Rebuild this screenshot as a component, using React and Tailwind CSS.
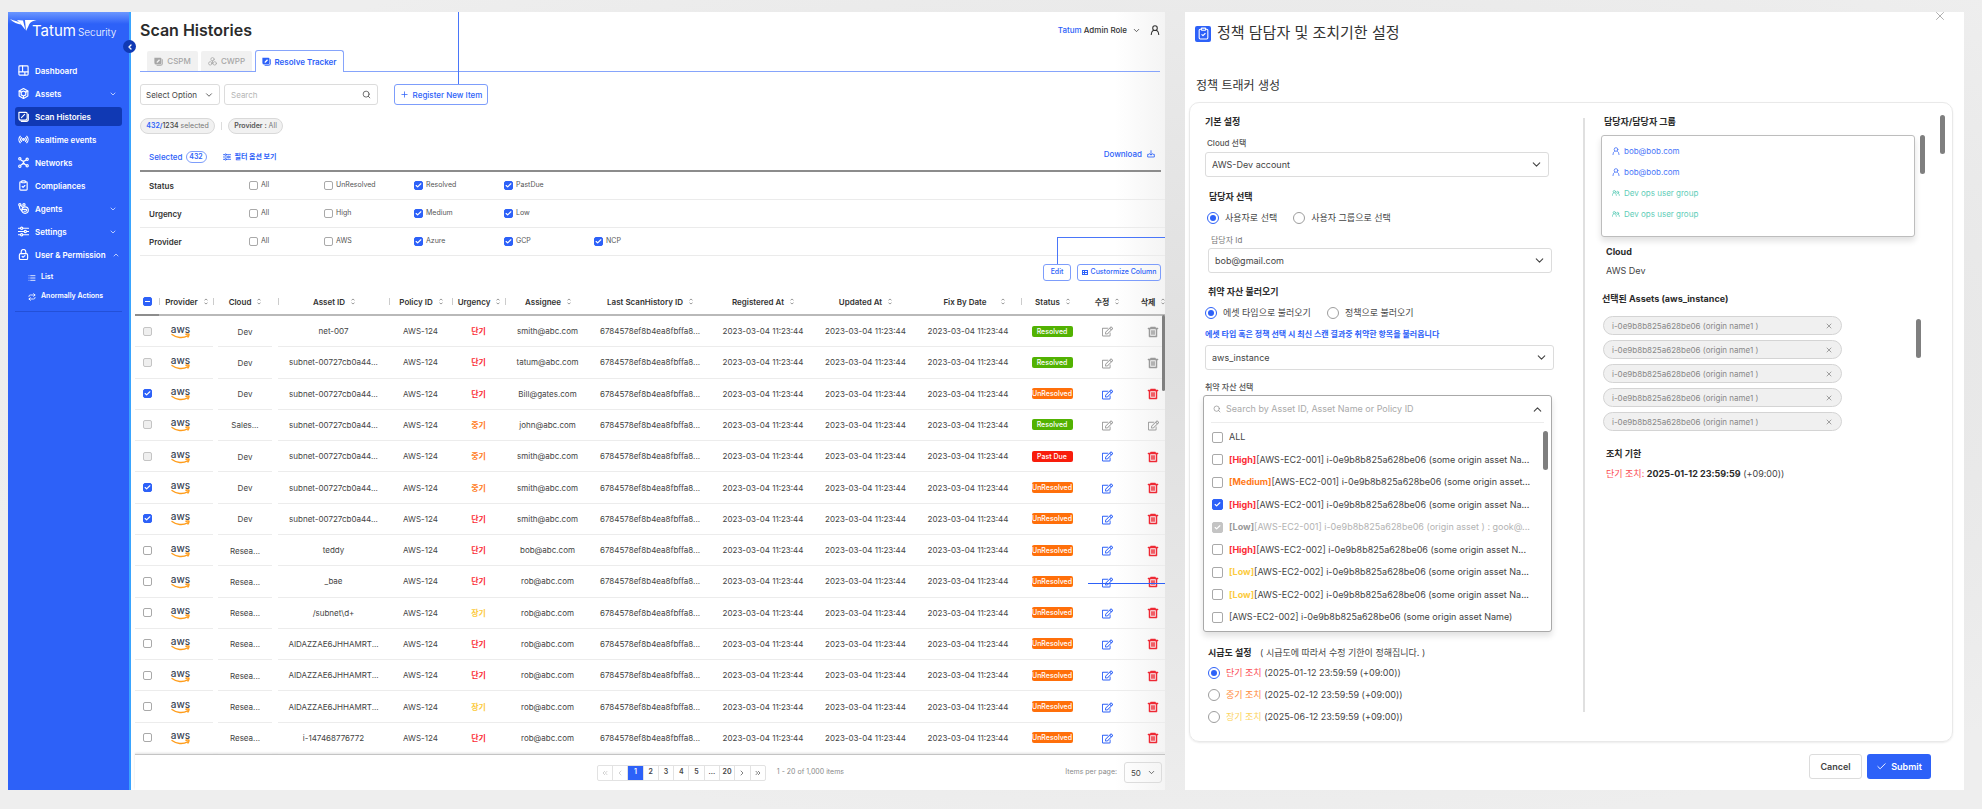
import React from 'react';
import clsx from 'clsx';
import {
  Check, ChevronDown, ChevronLeft, ChevronRight, ChevronUp, ChevronsLeft, ChevronsRight,
  ClipboardCheck, List, Plus, Radio, Repeat, Search, X,
} from 'lucide-react';
import { FaRegEdit } from 'react-icons/fa';
import { RiDeleteBin6Line } from 'react-icons/ri';

const Svg = ({ size = 11, strokeWidth = 2, className, children }) => (
  <svg
    width={size}
    height={size}
    viewBox="0 0 24 24"
    fill="none"
    stroke="currentColor"
    strokeWidth={strokeWidth}
    strokeLinecap="round"
    strokeLinejoin="round"
    className={clsx('shrink-0', className)}
    aria-hidden="true"
  >
    {children}
  </svg>
);

const DashboardIcon = (p) => (
  <Svg {...p}>
    <rect x="2" y="2" width="20" height="20" rx="2" />
    <path d="M10 2v13M2 15h20M15 15v7" />
  </Svg>
);

const AssetsIcon = (p) => (
  <Svg {...p}>
    <path d="M12 1l9.500 5.500v11L12 23l-9.500-5.500v-11z" />
    <path d="M12 6.500l5 2.500v6l-5 2.500L7 15V9z" />
    <path d="M2.500 6.500L7 9M21.500 6.500L17 9M12 18v5" />
  </Svg>
);

const ScanIcon = (p) => (
  <Svg {...p}>
    <path d="M2 3h15a3 3 0 0 1 3 3v9a5 5 0 0 1-5 5H7a5 5 0 0 1-5-5z" />
    <path d="M7 22.500h11a4.500 4.500 0 0 0 4.500-4.500V7" />
    <path d="M7.500 14.500l7-7" />
  </Svg>
);

const ScanSolidIcon = ({ size = 9 }) => (
  <svg width={size} height={size} viewBox="0 0 24 24" fill="currentColor" className="shrink-0" aria-hidden="true">
    <path fillRule="evenodd" d="M1 2h16a3 3 0 0 1 3 3v10a5 5 0 0 1-5 5H6a5 5 0 0 1-5-5zM7 12.500L13.500 6 16 8.500 9.500 15H7z" />
    <path d="M7 21.500h9a5.500 5.500 0 0 0 5.500-5.500V6h2v11a6.500 6.500 0 0 1-6.500 6.500H7z" />
  </svg>
);

const NetworksIcon = (p) => (
  <Svg {...p}>
    <circle cx="4" cy="4" r="2.500" />
    <circle cx="20" cy="5" r="2.500" />
    <circle cx="4" cy="20" r="2.500" />
    <circle cx="20" cy="19" r="2.500" />
    <path d="M6 6c3 4 9 4 12 0M6 18c3-4 9-4 12 0M9 8l6 8M15 8l-6 8" />
  </Svg>
);

const AgentsIcon = (p) => (
  <Svg {...p}>
    <circle cx="4" cy="4" r="2.500" />
    <circle cx="13" cy="4" r="2.500" />
    <path d="M3 7c0 5 2 8 5 10M6 5l5 5" />
    <circle cx="15.500" cy="15.500" r="7" />
    <path d="M9 14h8a2 2 0 0 1 0 4h-4" />
  </Svg>
);

const SlidersIcon = (p) => (
  <Svg {...p}>
    <path d="M1 5h4M11 5h12M1 12h12M19 12h4M1 19h4M11 19h12" />
    <circle cx="8" cy="5" r="2.500" />
    <circle cx="16" cy="12" r="2.500" />
    <circle cx="8" cy="19" r="2.500" />
  </Svg>
);

const LockIcon = (p) => (
  <Svg {...p}>
    <rect x="3" y="10" width="18" height="13" rx="3" />
    <path d="M7 10V6a5 5 0 0 1 10 0v4M9 16l2 2 4-3.500" />
  </Svg>
);

const CloudNodesIcon = (p) => (
  <Svg {...p}>
    <circle cx="12" cy="6" r="4.500" />
    <circle cx="6" cy="17" r="4.500" />
    <circle cx="18" cy="17" r="4.500" />
    <path d="M12 10v8" />
  </Svg>
);

const UserIcon = (p) => (
  <Svg {...p}>
    <circle cx="12" cy="7.500" r="5.500" />
    <path d="M3 23l1-5c.5-2.500 2-4 4.500-5.500M21 23l-1-5c-.5-2.500-2-4-4.500-5.500" />
  </Svg>
);

const UsersIcon = (p) => (
  <Svg {...p}>
    <circle cx="7" cy="8" r="3.500" />
    <path d="M1 19c0-4 2-6 4-7.500M13 19c0-4-2-6-4-7.500" />
    <circle cx="17" cy="10" r="3" />
    <path d="M22 19c0-3-1-5-3-6" />
  </Svg>
);

const DownloadIcon = (p) => (
  <Svg {...p}>
    <path d="M12 2v13M8 11l4 4 4-4M6 13H2v8h20v-8h-4" />
  </Svg>
);

const SortIcon = () => (
  <svg width="4" height="7" viewBox="0 0 8 14" fill="none" stroke="#9a9a9a" strokeWidth="2" className="shrink-0" aria-hidden="true">
    <path d="M1 4.500L4 2l3 2.500M1 9.500L4 12l3-2.500" />
  </svg>
);

const Checkbox = ({ id, checked = false, disabled = false, indeterminate = false, big = false, label }) => (
  <span className={clsx('grid shrink-0', big ? 'size-[11px]' : 'size-[9px]')}>
    <input
      id={id}
      type="checkbox"
      aria-label={label}
      defaultChecked={checked}
      disabled={disabled}
      className="peer col-start-1 row-start-1 size-full appearance-none rounded-[2px] border border-[#a9a9a9] bg-white checked:border-[#2d61f8] checked:bg-[#2d61f8] disabled:border-[#c4c4c4] disabled:bg-[#efefef] disabled:checked:border-[#c4c4c4] disabled:checked:bg-[#c4c4c4]"
    />
    <span className="pointer-events-none invisible col-start-1 row-start-1 grid place-items-center text-white peer-checked:visible">
      {indeterminate ? <span className="h-px w-[5px] bg-white" /> : <Check size={7} strokeWidth={4} />}
    </span>
  </span>
);

const SelectBox = ({ value, label, className, selectClass, chevron = 11, id }) => (
  <div className={clsx('grid items-center', className)}>
    <select
      id={id}
      aria-label={label}
      defaultValue={value}
      className={clsx(
        'col-start-1 row-start-1 h-full w-full appearance-none rounded-[3px] border border-[#dcdcdc] bg-transparent text-[#444]',
        selectClass,
      )}
    >
      <option>{value}</option>
    </select>
    <ChevronDown size={chevron} className="pointer-events-none col-start-1 row-start-1 mr-[6px] justify-self-end text-[#444]" />
  </div>
);

const NAV = [
  { label: 'Dashboard', Icon: DashboardIcon },
  { label: 'Assets', Icon: AssetsIcon, chevron: 'down' },
  { label: 'Scan Histories', Icon: ScanIcon, active: true },
  { label: 'Realtime events', Icon: Radio },
  { label: 'Networks', Icon: NetworksIcon },
  { label: 'Compliances', Icon: ClipboardCheck },
  { label: 'Agents', Icon: AgentsIcon, chevron: 'down' },
  { label: 'Settings', Icon: SlidersIcon, chevron: 'down' },
  { label: 'User & Permission', Icon: LockIcon, chevron: 'up' },
];

const Sidebar = () => (
  <aside className="relative flex w-[123px] shrink-0 flex-col border-r-2 border-[#39a4ff] bg-[#2d61f8] bg-[linear-gradient(#6b97ff,#2d61f8_12px)] text-white">
    <div className="flex h-[36px] items-start pt-[7px] pl-[2px]">
      <svg width="27" height="14" viewBox="0 0 27 14" fill="#fff" className="shrink-0" aria-hidden="true">
        <path d="M0 0c3 1.500 7 2 9.500 3.500l1.500 2C8 5 3 3.500 0 0z" />
        <path d="M7 1l6 .5L15.500 11 11.500 6z" />
        <path d="M15 1h11.500c-5 1-7 3-8 6L16 12z" />
      </svg>
      <span className="-ml-[5px] flex items-baseline gap-[2px] pt-[4px]">
        <span className="text-[15px] leading-[16px]">Tatum</span>
        <span className="text-[10px] leading-[16px] font-light">Security</span>
      </span>
    </div>
    <button
      type="button"
      aria-label="Collapse menu"
      className="absolute top-[28px] -right-[7px] z-10 grid size-[13px] place-items-center rounded-full bg-[#1039b4]"
    >
      <ChevronLeft size={8} strokeWidth={4} />
    </button>

    <nav className="mt-[13px] flex flex-col gap-1 px-[7px]">
      {NAV.map(({ label, Icon, active, chevron }) => (
        <a
          key={label}
          href="#"
          className={clsx('flex h-[19px] items-center gap-[6px] rounded-[3px] px-[3px] text-[8px] font-semibold', active && 'bg-[#1039b4]')}
        >
          <Icon size={11} strokeWidth={2.5} className="shrink-0" />
          <span className="whitespace-nowrap">{label}</span>
          {chevron === 'down' && <ChevronDown size={8} className="mr-[2px] ml-auto shrink-0" />}
          {chevron === 'up' && <ChevronUp size={8} className="mr-[2px] ml-auto shrink-0" />}
        </a>
      ))}
      <div className="flex flex-col border-b border-[#2350d8] pb-[5px] pl-[13px] text-[7px] font-semibold">
        <a href="#" className="flex h-[19px] items-center gap-[5px]"><List size={8} strokeWidth={2.5} /> List</a>
        <a href="#" className="flex h-[19px] items-center gap-[5px]"><Repeat size={8} strokeWidth={2.5} /> Anormally Actions</a>
      </div>
    </nav>
  </aside>
);

const FILTERS = [
  { name: 'Status', options: [['All'], ['UnResolved'], ['Resolved', true], ['PastDue', true]] },
  { name: 'Urgency', options: [['All'], ['High'], ['Medium', true], ['Low', true]] },
  { name: 'Provider', options: [['All'], ['AWS'], ['Azure', true], ['GCP', true], ['NCP', true]] },
];

const COLUMNS = [
  { name: 'Provider', width: 59, sep: true },
  { name: 'Cloud', width: 60 },
  { name: 'Asset ID', width: 111, sep: true },
  { name: 'Policy ID', width: 63, sep: true },
  { name: 'Urgency', width: 53, sep: true },
  { name: 'Assignee', width: 85, sep: true },
  { name: 'Last ScanHistory ID', width: 120 },
  { name: 'Registered At', width: 106 },
  { name: 'Updated At', width: 99 },
  { name: 'Fix By Date', width: 106 },
  { name: 'Status', width: 62, sep: true },
  { name: '수정', width: 48 },
  { name: '삭제', width: 34 },
];

// cloud, asset, urgency, assignee, status, checkbox
const ROWS = [
  ['Dev', 'net-007', '단기', 'smith@abc.com', 'Resolved', 'disabled'],
  ['Dev', 'subnet-00727cb0a44...', '단기', 'tatum@abc.com', 'Resolved', 'disabled'],
  ['Dev', 'subnet-00727cb0a44...', '단기', 'Bill@gates.com', 'UnResolved', 'checked'],
  ['Sales...', 'subnet-00727cb0a44...', '중기', 'john@abc.com', 'Resolved', 'disabled'],
  ['Dev', 'subnet-00727cb0a44...', '중기', 'smith@abc.com', 'Past Due', 'disabled'],
  ['Dev', 'subnet-00727cb0a44...', '중기', 'smith@abc.com', 'UnResolved', 'checked'],
  ['Dev', 'subnet-00727cb0a44...', '단기', 'smith@abc.com', 'UnResolved', 'checked'],
  ['Resea...', 'teddy', '단기', 'bob@abc.com', 'UnResolved'],
  ['Resea...', '_bae', '단기', 'rob@abc.com', 'UnResolved'],
  ['Resea...', '/subnet\\d+', '장기', 'rob@abc.com', 'UnResolved'],
  ['Resea...', 'AIDAZZAE6JHHAMRT...', '단기', 'rob@abc.com', 'UnResolved'],
  ['Resea...', 'AIDAZZAE6JHHAMRT...', '단기', 'rob@abc.com', 'UnResolved'],
  ['Resea...', 'AIDAZZAE6JHHAMRT...', '장기', 'rob@abc.com', 'UnResolved'],
  ['Resea...', 'i-147468776772', '단기', 'rob@abc.com', 'UnResolved'],
];

const URGENCY_COLORS = {
  단기: 'text-[#fb2c36]',
  중기: 'text-[#ff7a1a]',
  장기: 'text-[#fccb3f]',
};

const STATUS_COLORS = {
  Resolved: 'bg-[#52b202]',
  UnResolved: 'bg-[#ff6f0a]',
  'Past Due': 'bg-[#f81d0c]',
};

const AwsLogo = () => (
  <span className="flex w-[19px] flex-col items-center">
    <span className="text-[10px] leading-[8px] font-medium text-[#3b4656]">aws</span>
    <svg width="19" height="6" viewBox="0 0 19 6" fill="none" stroke="#ff9d1c" strokeWidth="1.400" strokeLinecap="round" aria-hidden="true">
      <path d="M1 1.500c4.500 3.500 11 4 15.500 1.300M15 1.200c1.500-.4 3-.3 3 .1s-.3 2-1 2.700" />
    </svg>
  </span>
);

const HistoryTable = () => (
  <table className="mt-2 h-[465px] w-full table-fixed border-separate border-spacing-0 text-center text-[8px] whitespace-nowrap text-[#444]">
    <colgroup>
      <col style={{ width: 24 }} />
      {COLUMNS.map((c) => <col key={c.name + c.width} style={{ width: c.width }} />)}
    </colgroup>
    <thead>
      <tr className="h-[27px] font-semibold text-[#333]">
        <th className="border-b-2 border-[#8d8d8d] p-0">
          <div className="flex justify-center">
            <Checkbox checked indeterminate label="Select all" />
          </div>
        </th>
        {COLUMNS.map((c) => (
          <th key={c.name + c.width} className="border-b-2 border-[#b9b9b9] p-0 font-semibold">
            <div
              className={clsx(
                'flex h-[7px] items-center justify-center',
                c.sep && 'border-l border-[#ccc]',
                c.name === 'Provider' && 'mr-1 border-r',
                c.name === 'Cloud' && 'pr-[6px]',
                c.name === '삭제' && 'pl-[10px]',
                c.name === 'Fix By Date' ? 'gap-[14px] pl-3' : 'gap-[6px]',
              )}
            >
              {c.name}
              <SortIcon />
            </div>
          </th>
        ))}
      </tr>
    </thead>
    <tbody className="[&_td]:p-0">
      {ROWS.map(([cloud, asset, urgency, assignee, status, box], i) => {
        const resolved = status === 'Resolved';
        const line = 'border-b border-[#ececec]';
        return (
          <tr key={i}>
            <td className={line}>
              <div className="flex justify-center">
                <Checkbox checked={box === 'checked'} disabled={box === 'disabled'} label={'Select ' + asset} />
              </div>
            </td>
            {/* the rule under these two cells stops short of the next column */}
            <td className="bg-[linear-gradient(#ececec,#ececec)] bg-[length:calc(100%-5px)_1px] bg-left-bottom bg-no-repeat">
              <div className="pl-3"><AwsLogo /></div>
            </td>
            <td className="bg-[linear-gradient(#ececec,#ececec)] bg-[length:calc(100%-6px)_1px] bg-left-bottom bg-no-repeat">
              <div className="pr-[6px]">{cloud}</div>
            </td>
            <td className={line}>{asset}</td>
            <td className={line}>AWS-124</td>
            <td className={clsx(line, 'font-bold', URGENCY_COLORS[urgency])}>{urgency}</td>
            <td className={line}>{assignee}</td>
            <td className={line}>6784578ef8b4ea8fbffa8...</td>
            <td className={line}>2023-03-04 11:23:44</td>
            <td className={line}>2023-03-04 11:23:44</td>
            <td className={line}>2023-03-04 11:23:44</td>
            <td className={line}>
              <span className={clsx('mx-auto flex h-[11px] w-[41px] items-center justify-center rounded-[2px] text-[7px] leading-[11px] font-medium text-white', STATUS_COLORS[status])}>
                {status}
              </span>
            </td>
            <td className={clsx(line, 'relative')}>
              <button type="button" aria-label="수정" className={clsx('align-middle', resolved ? 'text-[#9b9b9b]' : 'text-[#2d61f8]')}>
                <FaRegEdit size={11} />
              </button>
              {i === 8 && <span className="absolute top-[17px] left-[5px] z-10 h-px w-[77px] bg-[#2d61f8]" />}
            </td>
            <td className={line}>
              <button type="button" aria-label="삭제" className={clsx('pl-[10px] align-middle', resolved ? 'text-[#9b9b9b]' : 'text-[#ee2a34]')}>
                {i === 3 ? <FaRegEdit size={11} /> : <RiDeleteBin6Line size={12} strokeWidth={1} />}
              </button>
            </td>
          </tr>
        );
      })}
    </tbody>
  </table>
);

const PAGES = ['1', '2', '3', '4', '5', '...', '20'];

const Pagination = () => (
  <footer className="grid h-9 grid-cols-[464fr_169px_401fr] items-center border-t border-[#c4c4c4] shadow-[0_-1px_2px_rgba(0,0,0,0.12)]">
    <span />
    <div className="flex h-4 divide-x divide-[#e2e2e2] rounded-[2px] border border-[#e2e2e2] text-[7px] font-semibold text-[#444] [&>button]:grid [&>button]:flex-1 [&>button]:place-items-center">
      <button type="button" aria-label="First page" className="text-[#bbb]"><ChevronsLeft size={8} /></button>
      <button type="button" aria-label="Previous page" className="text-[#bbb]"><ChevronLeft size={8} /></button>
      {PAGES.map((p) => (
        <button key={p} type="button" className={clsx(p === '1' && 'bg-[#2d61f8] text-white')}>{p}</button>
      ))}
      <button type="button" aria-label="Next page"><ChevronRight size={8} /></button>
      <button type="button" aria-label="Last page"><ChevronsRight size={8} /></button>
    </div>
    <div className="flex items-center pr-[3px] pl-[11px] text-[7px] text-[#8a8a8a]">
      <span>1 - 20 of 1,000 items</span>
      <label htmlFor="per-page" className="ml-auto pr-[7px]">Items per page:</label>
      <SelectBox id="per-page" value="50" className="h-[21px] w-[38px]" selectClass="pl-[6px] text-[8px]" chevron={9} />
    </div>
  </footer>
);

const TABS = [
  { label: 'CSPM', Icon: ScanSolidIcon },
  { label: 'CWPP', Icon: CloudNodesIcon },
];

const ScanHistories = () => (
  <section className="flex overflow-hidden bg-white">
    <Sidebar />
    <main className="min-w-0 flex-1 bg-[linear-gradient(to_left,#f4f4f4,#fff_50px)] pl-1">
      <div className="pl-[5px]">
        <header className="flex h-9 items-center justify-between pr-[5px]">
          <h1 className="text-[16px] font-semibold text-[#2b2b2b]">Scan Histories</h1>
          <div className="flex items-center text-[8px] font-medium text-[#333]">
            <button type="button" className="flex items-center gap-[5px]">
              <span><span className="text-[#2d61f8]">Tatum</span> Admin Role</span>
              <ChevronDown size={9} />
            </button>
            <button type="button" aria-label="Account" className="ml-[9px]"><UserIcon size={10} strokeWidth={2.5} /></button>
          </div>
        </header>

        <nav className="mr-[5px] flex h-6 items-end gap-[3px] border-b border-[#86a4fb] pl-[7px] text-[8px] font-medium">
          {TABS.map(({ label, Icon }) => (
            <a key={label} href="#" className="flex h-5 w-[51px] items-center justify-center gap-1 rounded-t-[2px] bg-[#f1f1f1] text-[#a6a6a6]">
              <Icon size={9} /> {label}
            </a>
          ))}
          <a href="#" className="-mb-px flex h-[22px] w-[89px] items-center justify-center gap-[3px] rounded-t-[3px] border border-b-0 border-[#86a4fb] bg-white font-semibold text-[#2d61f8]">
            <ScanSolidIcon size={9} /> Resolve Tracker
          </a>
        </nav>

        <div className="mt-3 flex h-[21px] items-stretch">
          <SelectBox value="Select Option" label="Search field" className="w-20" selectClass="pl-[5px] text-[8px]" chevron={10} />
          <label className="ml-1 flex w-[154px] items-center rounded-[3px] border border-[#dcdcdc] px-[6px] text-[8px]">
            <input type="search" aria-label="Search" placeholder="Search" className="min-w-0 flex-1 outline-none placeholder:text-[#b5b5b5]" />
            <Search size={9} className="text-[#444]" />
          </label>
          <div className="relative ml-4 w-[94px]">
            <button type="button" className="flex h-full w-full items-center justify-center gap-1 rounded-[3px] border border-[#7d9dfb] text-[8px] font-medium text-[#2d61f8]">
              <Plus size={9} strokeWidth={2} /> Register New Item
            </button>
            <span className="absolute bottom-full left-[64px] h-[72px] w-px bg-[#4a76f9]" />
          </div>
        </div>

        <div className="mt-[13px] flex h-4 items-center text-[7px] text-[#777]">
          <span className="flex h-4 w-[75px] items-center justify-center rounded-full border border-[#d9d9d9] bg-[#f1f1f1]">
            <span className="font-semibold text-[#2d61f8]">432/</span>
            <span className="font-medium text-[#444]">1234</span>&nbsp;selected
          </span>
          <span className="mx-[6px] h-2 w-px bg-[#ddd]" />
          <span className="flex h-4 w-[55px] items-center justify-center rounded-full border border-[#d9d9d9] bg-[#f1f1f1]">
            <span className="font-semibold text-[#555]">Provider :</span>&nbsp;All
          </span>
        </div>

        <div className="mr-1 flex h-[38px] items-center border-b-2 border-[#8c8c8c] pt-[10px] pl-[9px] text-[8px] font-medium text-[#2d61f8]">
          <span>Selected</span>
          <span className="ml-[3px] flex h-3 w-[21px] items-center justify-center rounded-full border border-[#7d9dfb] text-[7px] font-semibold">432</span>
          <button type="button" className="ml-4 flex items-center gap-1 text-[7px] font-bold"><SlidersIcon size={8} strokeWidth={2.5} /> 필터 옵션 보기</button>
          <button type="button" className="mr-[6px] ml-auto flex items-center gap-[5px] pb-[6px]">Download <DownloadIcon size={8} strokeWidth={2.5} /></button>
        </div>

        {FILTERS.map(({ name, options }) => (
          <fieldset key={name} aria-label={name} className="flex h-7 items-center border-b border-[#ebebeb] pl-[9px] text-[7px] text-[#555]">
            <span className="w-[100px] text-[8px] font-semibold text-[#333]">{name}</span>
            {options.map(([option, checked], i) => (
              <div key={option} className={clsx('flex items-center gap-[3px]', i === 0 ? 'w-[75px]' : 'w-[90px]')}>
                <Checkbox id={name + option} checked={checked} />
                <label htmlFor={name + option}>{option}</label>
              </div>
            ))}
          </fieldset>
        ))}

        <div className="mt-2 mr-1 flex h-[17px] justify-end gap-[6px] text-[7px] font-medium text-[#2d61f8]">
          <div className="relative w-7">
            <button type="button" className="grid h-full w-full place-items-center rounded-[3px] border border-[#7d9dfb]">Edit</button>
            <span className="absolute bottom-full left-[14px] h-[27px] w-[108px] border-t border-l border-[#4a76f9]" />
          </div>
          <button type="button" className="flex w-[84px] items-center justify-center gap-[3px] rounded-[3px] border border-[#7d9dfb] whitespace-nowrap">
            <svg width="6" height="5" viewBox="0 0 6 5" fill="#2d61f8" className="shrink-0" aria-hidden="true">
              <path d="M0 0h6v1H0zM0 1h1v4H0zM2 1h1v4H2zM5 1h1v4H5zM0 4h6v1H0zM0 2h6v1H0z" />
            </svg>
            Custormize Column
          </button>
        </div>
      </div>

      <div className="relative">
        <HistoryTable />
        <span className="absolute top-[26px] right-0 h-[76px] w-[3px] rounded-full bg-[#7f7f7f]" />
      </div>
      <Pagination />
    </main>
  </section>
);

const RadioOption = ({ name, checked, children, id }) => (
  <div className="flex items-center gap-[6px]">
    <input
      id={id}
      type="radio"
      name={name}
      defaultChecked={checked}
      className="size-3 shrink-0 appearance-none rounded-full border border-[#9d9d9d] bg-white bg-clip-content p-[2px] checked:border-[#2d61f8] checked:bg-[#2d61f8]"
    />
    <label htmlFor={id}>{children}</label>
  </div>
);

const ScrollThumb = ({ className }) => <span className={clsx('absolute h-[39px] w-[5px] rounded-full bg-[#7f7f7f]', className)} />;

const ASSETS = [
  { text: 'ALL' },
  { level: '[High]', text: '[AWS-EC2-001] i-0e9b8b825a628be06 (some origin asset Na...' },
  { level: '[Medium]', text: '[AWS-EC2-001] i-0e9b8b825a628be06 (some origin asset...' },
  { level: '[High]', text: '[AWS-EC2-001] i-0e9b8b825a628be06 (some origin asset Na...', checked: true },
  { level: '[Low]', text: '[AWS-EC2-001] i-0e9b8b825a628be06 (origin asset ) : gook@...', checked: true, disabled: true },
  { level: '[High]', text: '[AWS-EC2-002] i-0e9b8b825a628be06 (some origin asset N...' },
  { level: '[Low]', text: '[AWS-EC2-002] i-0e9b8b825a628be06 (some origin asset Na...' },
  { level: '[Low]', text: '[AWS-EC2-002] i-0e9b8b825a628be06 (some origin asset Na...' },
  { text: '[AWS-EC2-002] i-0e9b8b825a628be06 (some origin asset Name)' },
];

const LEVEL_COLORS = {
  '[High]': 'text-[#fb2c36]',
  '[Medium]': 'text-[#ff7a1a]',
  '[Low]': 'text-[#fccb3f]',
};

const DEADLINES = [
  ['단기 조치', '(2025-01-12 23:59:59 (+09:00))', 'text-[#fb4a52]'],
  ['중기 조치', '(2025-02-12 23:59:59 (+09:00))', 'text-[#ff8a3a]'],
  ['장기 조치', '(2025-06-12 23:59:59 (+09:00))', 'text-[#fcd35f]'],
];

const PolicyForm = () => (
  <div className="w-[393px] shrink-0 pl-[15px] text-[9px] leading-[12px] text-[#444]">
    <h3 className="pt-[13px] font-bold text-[#2b2b2b]">기본 설정</h3>
    <label htmlFor="cloud" className="mt-[9px] block pl-[2px] text-[8px] font-medium text-[#555]">Cloud 선택</label>
    <SelectBox id="cloud" value="AWS-Dev account" className="mt-[3px] h-[25px] w-[344px]" selectClass="pl-[6px] text-[9px]" chevron={13} />

    <h3 className="mt-[14px] pl-[4px] font-bold text-[#2b2b2b]">담당자 선택</h3>
    <div className="mt-[9px] flex gap-4 pl-[2px]">
      <RadioOption id="by-user" name="owner" checked>사용자로 선택</RadioOption>
      <RadioOption id="by-group" name="owner">사용자 그룹으로 선택</RadioOption>
    </div>
    <label htmlFor="owner" className="mt-[10px] block pl-[6px] text-[8px] text-[#777]">담당자 Id</label>
    <SelectBox id="owner" value="bob@gmail.com" className="mt-[2px] ml-[3px] h-[25px] w-[344px]" selectClass="pl-[6px] text-[9px]" chevron={13} />

    <h3 className="mt-[13px] pl-[3px] font-bold text-[#2b2b2b]">취약 자산 불러오기</h3>
    <div className="mt-[9px] flex gap-4">
      <RadioOption id="by-type" name="source" checked>에셋 타입으로 불러오기</RadioOption>
      <RadioOption id="by-policy" name="source">정책으로 불러오기</RadioOption>
    </div>
    <p className="mt-[9px] text-[8px] font-bold text-[#2d61f8]">에셋 타입 혹은 정책 선택 시 최신 스캔 결과중 취약한 항목을 불러옵니다</p>
    <SelectBox value="aws_instance" label="Asset type" className="mt-[5px] h-[25px] w-[349px]" selectClass="pl-[6px] text-[9px]" chevron={13} />

    <label htmlFor="asset-search" className="mt-[11px] block text-[8px] font-medium text-[#555]">취약 자산 선택</label>
    <div className="relative mt-[2px] -ml-[2px] h-[237px] w-[349px] rounded-[3px] border border-[#a9a9a9] bg-white px-[7px] shadow-[0_4px_6px_rgba(0,0,0,0.12)]">
      <div className="flex h-[27px] items-center gap-[5px] border-b border-[#ececec] pl-[2px]">
        <Search size={8} className="text-[#888]" />
        <input
          id="asset-search"
          type="text"
          placeholder="Search by Asset ID, Asset Name or Policy ID"
          className="min-w-0 flex-1 text-[9px] outline-none placeholder:text-[#aaa]"
        />
        <ChevronUp size={13} />
      </div>
      <ul className="flex h-[208px] flex-col justify-between py-[8px] pl-px whitespace-nowrap">
        {ASSETS.map(({ level, text, checked, disabled }, i) => (
          <li key={i} className="flex items-center gap-[6px]">
            <Checkbox id={'asset-' + i} big checked={checked} disabled={disabled} />
            <label htmlFor={'asset-' + i} className={clsx(disabled && 'text-[#b3b3b3]')}>
              {level && <span className={clsx('font-bold', disabled ? 'text-[#999]' : LEVEL_COLORS[level])}>{level}</span>}
              {text}
            </label>
          </li>
        ))}
      </ul>
      <ScrollThumb className="top-[35px] right-[3px]" />
    </div>

    <h3 className="mt-[15px] pl-[3px]">
      <span className="mr-[6px] font-bold text-[#2b2b2b]">시급도 설정</span> ( 시급도에 따라서 수정 기한이 정해집니다. )
    </h3>
    <div className="mt-2 flex flex-col gap-[10px] pl-[3px]">
      {DEADLINES.map(([name, date, color], i) => (
        <RadioOption key={name} id={'deadline-' + i} name="deadline" checked={i === 0}>
          <span className={color}>{name}</span> {date}
        </RadioOption>
      ))}
    </div>
  </div>
);

const OWNERS = [
  ['bob@bob.com', UserIcon, 'text-[#4a76f9]'],
  ['bob@bob.com', UserIcon, 'text-[#4a76f9]'],
  ['Dev ops user group', UsersIcon, 'text-[#5fcdb8]'],
  ['Dev ops user group', UsersIcon, 'text-[#5fcdb8]'],
];

const PolicySummary = () => (
  <div className="min-w-0 flex-1 pl-4 text-[9px] leading-[12px] text-[#444]">
    <h3 className="pt-[13px] pl-[3px] font-bold text-[#2b2b2b]">담당자/담당자 그룹</h3>
    <div className="relative mt-[7px] h-[102px] w-[314px] rounded-[3px] border border-[#bdbdbd] bg-white pt-1 pl-[10px] shadow-[0_4px_6px_rgba(0,0,0,0.12)]">
      <ul>
        {OWNERS.map(([name, Icon, color], i) => (
          <li key={i} className={clsx('flex h-[21px] items-center gap-1 text-[8px]', color)}>
            <Icon size={8} strokeWidth={2.5} /> {name}
          </li>
        ))}
      </ul>
      <ScrollThumb className="-top-px -right-[11px]" />
    </div>

    <h3 className="mt-[9px] pl-[5px] font-bold text-[#2b2b2b]">Cloud</h3>
    <p className="mt-[7px] pl-[5px]">AWS Dev</p>

    <h3 className="mt-4 pl-px font-bold text-[#2b2b2b]">선택된 Assets (aws_instance)</h3>
    <div className="relative mt-[11px] w-[320px] pl-[2px]">
      <ul className="flex w-[239px] flex-col gap-[5px]">
        {[0, 1, 2, 3, 4].map((n) => (
          <li key={n} className="flex h-[19px] items-center justify-between rounded-full border border-[#d4d4d4] bg-[#f0f0f0] px-2 text-[8px] text-[#888]">
            i-0e9b8b825a628be06 (origin name1 )
            <button type="button" aria-label="Remove" className="text-[#777]"><X size={8} /></button>
          </li>
        ))}
      </ul>
      <ScrollThumb className="top-[3px] right-0" />
    </div>

    <h3 className="mt-[17px] pl-[5px] font-bold text-[#2b2b2b]">조치 기한</h3>
    <p className="mt-2 pl-[5px]">
      <span className="text-[#fb4a52]">단기 조치:</span> <strong className="font-bold text-[#2b2b2b]">2025-01-12 23:59:59</strong> (+09:00))
    </p>
  </div>
);

const PolicyDialog = () => (
  <section className="relative flex flex-col bg-white pr-[11px] pl-1">
    <button type="button" aria-label="Close" className="absolute -top-[3px] right-[17px] text-[#777]"><X size={14} strokeWidth={1} /></button>
    <header className="flex h-[43px] items-center gap-[6px] pl-[6px]">
      <span className="grid size-4 place-items-center rounded-[2px] bg-[#2d61f8] text-white"><ClipboardCheck size={13} /></span>
      <h2 className="text-[15px] text-[#333]">정책 담담자 및 조치기한 설정</h2>
    </header>
    <p className="flex h-[47px] items-end pb-[7px] pl-[7px] text-[12px] leading-[18px] text-[#333]">정책 트래커 생성</p>

    <form className="relative flex h-[640px] rounded-[10px] border border-[#e9e9e9] shadow-[0_1px_2px_rgba(0,0,0,0.08)]" onSubmit={(e) => e.preventDefault()}>
      <PolicyForm />
      <span className="mt-[15px] h-[594px] w-[2px] shrink-0 bg-[#e0e0e0]" />
      <PolicySummary />
      <ScrollThumb className="top-[12px] right-[7px]" />
    </form>

    <footer className="flex items-center justify-end gap-[5px] pt-3 pr-[22px] text-[9px] font-semibold">
      <button type="button" className="h-[25px] w-[53px] rounded-[3px] border border-[#dcdcdc] text-[#444]">Cancel</button>
      <button type="submit" className="flex h-[25px] w-[64px] items-center justify-center gap-1 rounded-[3px] bg-[#2d61f8] text-white">
        <Check size={11} /> Submit
      </button>
    </footer>
  </section>
);

const App = () => (
  <div
    className="grid min-h-screen grid-cols-[1157fr_779fr] items-stretch gap-5 bg-[#e9e9e9] bg-[radial-gradient(ellipse_at_60%_45%,#dfdfdf,#eeeeee_75%)] px-[8px] pt-3 pr-[18px] pb-[19px]"
    style={{ fontFamily: "Inter, 'Noto Sans CJK KR', sans-serif" }}
  >
    <ScanHistories />
    <PolicyDialog />
  </div>
);

export default App;
